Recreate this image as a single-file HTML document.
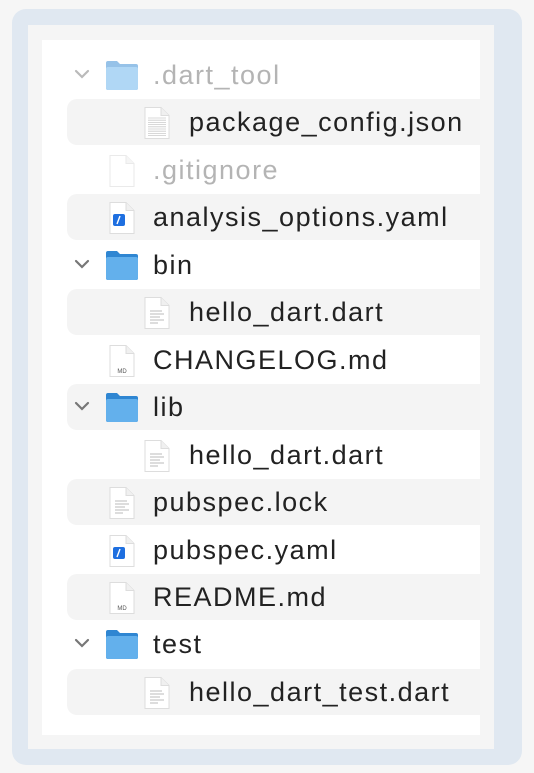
<!DOCTYPE html>
<html><head><style>
body{margin:0;width:534px;height:773px;background:#f6f6f6;position:relative;overflow:hidden;font-family:"Liberation Sans",Arial,sans-serif}
.frame{position:absolute;left:12px;top:9px;width:510px;height:756px;background:#e0e8f1;border-radius:14px}
.inner{position:absolute;left:28px;top:25px;width:466px;height:724px;background:#f5f5f5}
.panel{position:absolute;left:42px;top:40px;width:438px;height:695px;background:#fff}
.row{position:absolute;left:67px;width:413px;height:46px}
.row.s{background:#f4f4f4;border-radius:10px 0 0 10px}
.t{position:absolute;font-size:27px;letter-spacing:1.5px;color:#222;line-height:46px;top:0;white-space:nowrap}
.g{color:#b4b4b4}
svg{position:absolute}
</style></head><body>
<div class="frame"></div><div class="inner"></div><div class="panel"></div>
<div id="c"></div>
<script>
var rows=[
[0,'folder','.dart_tool',1],[1,'doc','package_config.json',0],[0,'blank','.gitignore',1],[0,'yaml','analysis_options.yaml',0],
[0,'folder','bin',0],[1,'lines','hello_dart.dart',0],[0,'md','CHANGELOG.md',0],[0,'folder','lib',0],[1,'lines','hello_dart.dart',0],
[0,'lines','pubspec.lock',0],[0,'yaml','pubspec.yaml',0],[0,'md','README.md',0],[0,'folder','test',0],[1,'lines','hello_dart_test.dart',0]];
var h='';
function fileIcon(x,inner,op){return '<svg style="left:'+x+'px;top:7px;opacity:'+op+'" width="30" height="34" viewBox="0 0 30 34"><path d="M3 1.5h16l8 8v23H3z" fill="#fff" stroke="#ddd"/><path d="M19 1.5v8h8" fill="#f0f0f0" stroke="#ddd"/>'+inner+'</svg>';}
rows.forEach(function(r,i){
 var top=52+i*47.45, lvl=r[0], ty=r[1], g=r[3];
 h+='<div class="row'+(i%2?' s':'')+'" style="top:'+top+'px">';
 var tx=lvl?122:86;
 if(ty=='folder'){
  var op=g?0.5:1;
  h+='<svg style="left:7px;top:16px;opacity:'+op+'" width="16" height="12" viewBox="0 0 16 12"><path d="M2 3l6 6 6-6" fill="none" stroke="#777" stroke-width="2.2" stroke-linecap="round"/></svg>';
  h+='<svg style="left:38px;top:7px;opacity:'+op+'" width="34" height="33" viewBox="0 0 34 33"><path d="M1 4a2 2 0 0 1 2-2h9l3 3h16a2 2 0 0 1 2 2v22a2 2 0 0 1-2 2H3a2 2 0 0 1-2-2z" fill="#2f86d2"/><rect x="1" y="8" width="32" height="23" rx="2" fill="#63b0ec"/></svg>';
 } else if(ty=='doc'){
  var l='';for(var k=0;k<9;k++)l+='<line x1="6" x2="24" y1="'+(12+k*2.2)+'" y2="'+(12+k*2.2)+'" stroke="#ccc" stroke-width="0.8"/>';
  h+=fileIcon(lvl?75:40,l,1);
 } else if(ty=='lines'){
  var l='';[[8,20,15],[8,22,18],[8,18,21],[8,22,24],[8,16,27]].forEach(function(a){l+='<line x1="'+a[0]+'" x2="'+a[1]+'" y1="'+a[2]+'" y2="'+a[2]+'" stroke="#bbb" stroke-width="1"/>'});
  h+=fileIcon(lvl?75:40,l,1);
 } else if(ty=='blank'){
  h+=fileIcon(40,'',0.6);
 } else if(ty=='yaml'){
  h+=fileIcon(40,'<rect x="6" y="13" width="12" height="12" rx="2" fill="#1e6fe0"/><path d="M10 23l3-8" stroke="#fff" stroke-width="1.4"/>',1);
 } else if(ty=='md'){
  h+=fileIcon(40,'<text x="15" y="29" font-size="6" text-anchor="middle" fill="#555" font-family="Liberation Sans">MD</text>',1);
 }
 h+='<div class="t'+(g?' g':'')+'" style="left:'+tx+'px">'+r[2]+'</div></div>';
});
document.getElementById('c').innerHTML=h;
</script>
</body></html>
